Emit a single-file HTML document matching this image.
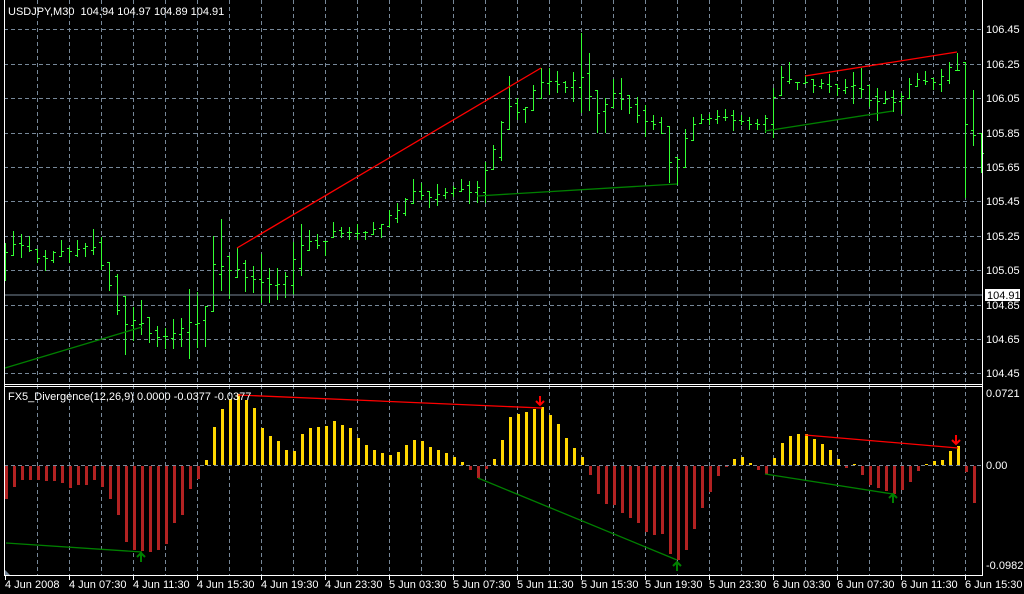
<!DOCTYPE html>
<html><head><meta charset="utf-8"><style>
html,body{margin:0;padding:0;background:#000;width:1024px;height:594px;overflow:hidden}
svg{display:block}
text{font-family:"Liberation Sans",sans-serif;font-size:11px;fill:#fff;white-space:pre}
</style></head><body>
<svg id="s" width="1024" height="594" xmlns="http://www.w3.org/2000/svg">
<rect width="1024" height="594" fill="#000"/>
<g id="grid" stroke="#778899" stroke-dasharray="4,3" stroke-width="1"></g>
<g id="bars"></g>
<g id="ind"></g>
<g fill="none" stroke-width="1.3">
<line x1="5" y1="368" x2="142" y2="327" stroke="#008000"/>
<line x1="237" y1="248" x2="541" y2="68" stroke="#ff0000"/>
<line x1="477" y1="196" x2="677" y2="184" stroke="#008000"/>
<line x1="805" y1="76" x2="957" y2="52" stroke="#ff0000"/>
<line x1="765" y1="131" x2="893" y2="111" stroke="#008000"/>
<line x1="6" y1="543" x2="142" y2="552" stroke="#008000"/>
<line x1="238" y1="395" x2="542" y2="408" stroke="#ff0000"/>
<line x1="478" y1="478" x2="677" y2="560" stroke="#008000"/>
<line x1="805" y1="435" x2="958" y2="448" stroke="#ff0000"/>
<line x1="765" y1="474" x2="893" y2="494" stroke="#008000"/>
</g>
<g fill="none" stroke-width="2">
<path d="M141 562V553M137 557L141 553L145 557" stroke="#008000"/>
<path d="M677 571V562M673 566L677 562L681 566" stroke="#008000"/>
<path d="M893 503V494M889 498L893 494L897 498" stroke="#008000"/>
<path d="M540 396V405M536 401L540 405L544 401" stroke="#ff0000"/>
<path d="M956 435V444M952 440L956 444L960 440" stroke="#ff0000"/>
</g>
<line x1="4" y1="295" x2="982" y2="295" stroke="#778899"/>
<g stroke="#fff" stroke-width="1" fill="none">
<line x1="4.5" y1="0" x2="4.5" y2="575"/>
<line x1="982.5" y1="0" x2="982.5" y2="575"/>
<line x1="4" y1="384.5" x2="982" y2="384.5"/>
<line x1="4" y1="386.5" x2="982" y2="386.5"/>
<line x1="4" y1="575.5" x2="983" y2="575.5"/>
</g>
<text x="8" y="15">USDJPY,M30  104.94 104.97 104.89 104.91</text>
<text x="8" y="400">FX5_Divergence(12,26,9) 0.0000 -0.0377 -0.0377</text>
<g id="axis"></g>
<rect x="985" y="289" width="35" height="12" fill="#fff"/>
<text x="987" y="299" style="fill:#000">104.91</text>
<text x="986" y="397">0.0721</text>
<text x="986" y="469">0.00</text>
<text x="986" y="569">-0.0982</text>
<path d="M5 570L5 575L10 575Z" fill="#778899"/>
</svg>
<script>
var NS="http://www.w3.org/2000/svg";
function el(p,t,a,txt){var e=document.createElementNS(NS,t);for(var k in a)e.setAttribute(k,a[k]);if(txt!==undefined)e.textContent=txt;p.appendChild(e);return e;}
var g=document.getElementById('grid');
for(var x=37;x<982;x+=32){el(g,'line',{x1:x+.5,y1:0,x2:x+.5,y2:575});}
var hy=[29,64,98,133,167,201,236,270,305,339,373];
var labs=['106.45','106.25','106.05','105.85','105.65','105.45','105.25','105.05','104.85','104.65','104.45'];
var ax=document.getElementById('axis');
hy.forEach(function(y,i){el(g,'line',{x1:4,y1:y+.5,x2:982,y2:y+.5});if(i!=8)el(ax,'text',{x:986,y:y+4},labs[i]);});
el(ax,'text',{x:986,y:309},'104.85');
el(g,'line',{x1:4,y1:465.5,x2:982,y2:465.5});
var tl=['4 Jun 2008','4 Jun 07:30','4 Jun 11:30','4 Jun 15:30','4 Jun 19:30','4 Jun 23:30','5 Jun 03:30','5 Jun 07:30','5 Jun 11:30','5 Jun 15:30','5 Jun 19:30','5 Jun 23:30','6 Jun 03:30','6 Jun 07:30','6 Jun 11:30','6 Jun 15:30'];
tl.forEach(function(t,i){var x=i==0?5:5+64*i;el(ax,'line',{x1:x+.5,y1:576,x2:x+.5,y2:580,stroke:'#fff'});el(ax,'text',{x:x,y:588},t);});
var HL=[[243,280],[231,255],[234,257],[236,251],[249,262],[250,270],[251,262],[240,256],[247,262],[240,256],[243,256],[229,254],[237,269],[262,290],[274,314],[296,354],[307,340],[300,334],[317,342],[326,346],[328,348],[319,348],[318,346],[289,358],[292,347],[306,346],[236,311],[219,290],[256,298],[248,277],[260,291],[266,292],[254,302],[268,302],[268,299],[272,297],[242,294],[224,275],[230,250],[234,248],[241,255],
[222,237],[227,237],[227,239],[224,239],[231,239],[222,234],[224,237],[210,226],[203,222],[198,215],[179,203],[183,199],[191,207],[184,205],[188,198],[186,196],[179,191],[181,203],[181,202],[162,202],[145,169],[121,160],[76,129],[98,119],[107,122],[85,110],[68,98],[68,94],[71,92],[81,92],[72,101],[33,112],[53,110],[90,132],[98,132],[79,107],[78,109],[95,113],[97,122],[105,136],[115,129],
[117,133],[126,182],[157,184],[129,167],[117,140],[114,123],[114,124],[110,123],[109,120],[110,130],[115,124],[117,129],[119,129],[115,132],[88,137],[66,95],[62,83],[82,89],[75,83],[79,92],[79,88],[74,92],[84,95],[79,93],[72,103],[68,97],[85,106],[88,120],[91,103],[90,111],[93,113],[78,98],[73,86],[71,84],[78,89],[69,91],[62,83],[53,70],[62,197],[90,145],[133,172]];
var b=document.getElementById('bars');
var mids=HL.map(function(v){return (v[0]+v[1])/2;});
var GC='#32ff32';
HL.forEach(function(v,k){var x=5+8*k;var H=v[0],L=v[1];
 var prev=k>0?mids[k-1]:mids[0], nxt=k<HL.length-1?mids[k+1]:mids[k];
 var O=Math.max(H,Math.min(L,Math.round(prev)));var C=Math.max(H,Math.min(L,Math.round((mids[k]+nxt)/2)));
 el(b,'rect',{x:x,y:H,width:1,height:L-H+1,fill:GC});
 if(x>5)el(b,'rect',{x:x-2,y:O,width:2,height:1,fill:GC});
 el(b,'rect',{x:x+1,y:C,width:2,height:1,fill:GC});});
var IV=[-33,-21,-14,-14,-14,-15,-15,-17,-22,-19,-19,-14,-21,-33,-49,-76,-84,-85,-86,-84,-78,-57,-49,-23,-13,5,38,56,66,71,65,57,37,29,24,15,14,31,37,38,39,44,40,37,27,20,15,12,10,13,20,25,24,18,15,12,8,3,-4,-12,-3,6,25,48,51,53,56,58,50,41,27,17,8,-9,-28,-38,-39,-47,-52,-57,-66,-69,-68,-88,-94,-84,-63,-42,-26,-10,-1,6,8,2,-4,-8,7,22,29,31,31,26,21,15,6,-2,1,-9,-19,-22,-25,-28,-24,-16,-5,1,4,5,14,19,-6,-37,-67];
var ind=document.getElementById('ind');
IV.forEach(function(v,k){var x=5+8*k;if(x>980)return;var w=Math.min(3,982-x);
 if(v>=0)el(ind,'rect',{x:x,y:465-v,width:w,height:v,fill:'#ffd700'});
 else el(ind,'rect',{x:x,y:466,width:w,height:-v,fill:'#b22222'});});
</script>
</body></html>
